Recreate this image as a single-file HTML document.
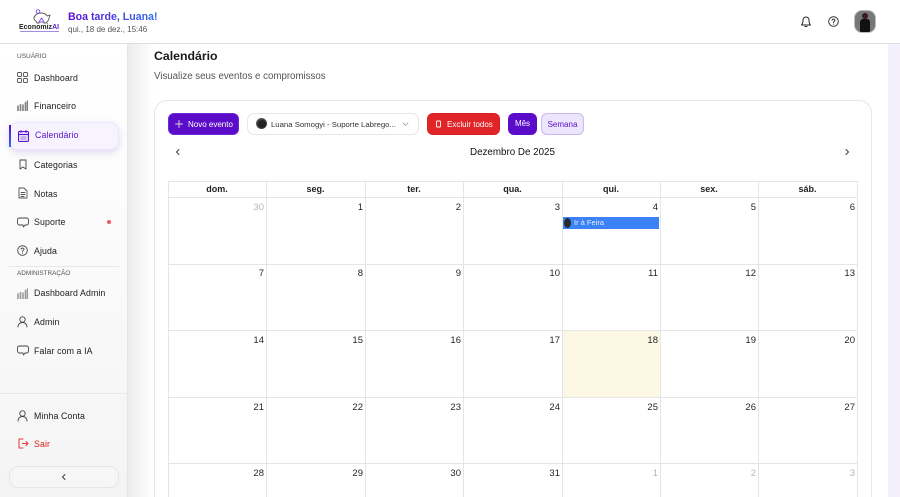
<!DOCTYPE html>
<html lang="pt-BR"><head><meta charset="utf-8"><style>
*{box-sizing:border-box}
html,body{margin:0;padding:0;width:900px;height:497px;overflow:hidden;background:#fff;font-family:"Liberation Sans",sans-serif;color:#171717}
#r{position:relative;width:900px;height:497px;overflow:hidden;background:#fff}
.a{position:absolute}
.t{position:absolute;white-space:nowrap;line-height:14px}
svg{position:absolute;fill:none;stroke-linecap:round;stroke-linejoin:round}
.nav{font-size:8.8px;color:#1c1c1c;letter-spacing:.1px}
.cell{position:absolute;font-size:9.5px;text-align:right;padding:5px 2px 0 0;line-height:11px;color:#262626}
.h{position:absolute;top:181px;height:17px;font-size:9px;font-weight:bold;text-align:center;line-height:16px;color:#222}
.v{position:absolute;top:181px;width:1px;height:316px;background:#e5e5e5}
.hl{position:absolute;left:168px;width:690px;height:1px;background:#e5e5e5}
.btn{position:absolute;top:113px;height:22px;border-radius:6px;font-size:8px;line-height:21px;white-space:nowrap}
</style></head><body><div id="r">
<div class="a" style="left:888px;top:44px;width:12px;height:453px;background:#f3f0fc"></div>
<div class="a" style="left:128px;top:44px;width:26px;height:453px;background:linear-gradient(90deg,#ececec,#fff)"></div>
<div class="a" style="left:0;top:44px;width:128px;height:453px;background:linear-gradient(180deg,#fff,#fbfbfb 40%,#f4f4f4);border-right:1px solid #e5e5e5"></div>
<div class="a" style="left:0;top:0;width:900px;height:44px;background:#fff;border-bottom:1px solid #dedede"></div>

<svg style="left:32px;top:9px" width="20" height="15" viewBox="0 0 20 15" stroke="#555" stroke-width=".9"><path d="M3 7c1-2 3-3 6-3s5 1 6 3l3-1-1 3c0 2-1 3-2 4l-1 1h-2v-1H7v1H5l-1-2C2 11 1 9 3 7z"/><circle cx="6" cy="2.500" r="1.800" stroke="#7c4ddb"/><path d="M7 13l2.500-4 2.500 4z" stroke="#7c4ddb"/></svg>
<div class="t" style="left:19px;top:23px;font-size:7px;font-weight:bold;color:#222;line-height:9px">Economiz<span style="color:#5a22c8">AI</span></div>
<div class="a" style="left:20px;top:31px;width:39px;height:1px;background:#a48ce6"></div>
<div class="t" style="left:68px;top:10px;font-size:10.6px;font-weight:bold;background:linear-gradient(90deg,#5b0fd0,#2f6ff0);-webkit-background-clip:text;background-clip:text;color:transparent">Boa tarde, Luana!</div>
<div class="t" style="left:68px;top:23px;font-size:8px;color:#555">qui., 18 de dez., 15:46</div>

<svg style="left:800px;top:15px" width="12" height="13" viewBox="0 0 12 13" stroke="#222" stroke-width="1"><path d="M1.500 10c1-1 1.500-2 1.500-5a3 3 0 0 1 6 0c0 3 .5 4 1.500 5zM5 11.500h2"/></svg>
<svg style="left:828px;top:16px" width="11" height="11" viewBox="0 0 11 11" stroke="#222" stroke-width=".9"><circle cx="5.500" cy="5.500" r="4.800"/><path d="M4 4.200c.3-1.700 3.200-1.500 3 .2-.1 1-1.500 1-1.500 2.100M5.500 8v.2"/></svg>
<div class="a" style="left:854px;top:10px;width:22px;height:23px;border-radius:8px;background:#777;overflow:hidden;border:1px solid #bbb"><div class="a" style="left:7px;top:2px;width:6px;height:6px;border-radius:50%;background:#3a1a1a"></div><div class="a" style="left:5px;top:8px;width:10px;height:14px;border-radius:3px 3px 0 0;background:#111"></div></div>

<div class="t" style="left:17px;top:50px;font-size:6.5px;color:#555">USUÁRIO</div>
<div class="t nav" style="left:34px;top:71px">Dashboard</div>
<svg style="left:17px;top:72px" width="11" height="11" viewBox="0 0 11 11" stroke="#555" stroke-width=".9"><rect x=".5" y=".5" width="4" height="4" rx="1"/><rect x="6.500" y=".5" width="4" height="4" rx="1"/><rect x=".5" y="6.500" width="4" height="4" rx="1"/><rect x="6.500" y="6.500" width="4" height="4" rx="1"/></svg>
<div class="t nav" style="left:34px;top:99px">Financeiro</div>
<svg style="left:17px;top:100px" width="11" height="11" viewBox="0 0 11 11" stroke="#808080" stroke-width="1.600" stroke-linecap="butt"><path d="M1 11V6M3.500 11V4.500M6 11V5M8.500 11V2.500M10.500 11V1"/></svg>

<div class="a" style="left:9px;top:122px;width:110px;height:28px;border-radius:9px;background:#f7f3ff;border:1px solid #ece6fb;box-shadow:0 3px 8px rgba(90,50,180,.16)"></div>
<div class="a" style="left:9px;top:125px;width:2px;height:22px;background:linear-gradient(#5b0fd0,#2f6ff0)"></div>
<div class="t nav" style="left:35px;top:128px;color:#5b12cf">Calendário</div>
<svg style="left:18px;top:130px" width="11" height="12" viewBox="0 0 11 12" stroke="#5b12cf" stroke-width="1"><rect x=".5" y="1.500" width="10" height="10" rx="1" fill="#e2d8fa"/><path d="M.5 4.500h10M3 .5v2M8 .5v2"/><path d="M3 7h5M3 9h5" stroke="#a98ae8"/></svg>

<div class="t nav" style="left:34px;top:158px">Categorias</div>
<svg style="left:19px;top:159px" width="8" height="11" viewBox="0 0 8 11" stroke="#444" stroke-width=".9"><path d="M1 1h6v9L4 8 1 10z"/></svg>
<div class="t nav" style="left:34px;top:187px">Notas</div>
<svg style="left:18px;top:187px" width="10" height="12" viewBox="0 0 10 12" stroke="#555" stroke-width=".9"><path d="M1 1h5l3 3v7H1zM3 5.500h4M3 7.500h4M3 9.500h3"/></svg>
<div class="t nav" style="left:34px;top:215px">Suporte</div>
<svg style="left:17px;top:217px" width="12" height="11" viewBox="0 0 12 11" stroke="#444" stroke-width=".9"><path d="M2.500 1h7a2 2 0 0 1 2 2v3a2 2 0 0 1-2 2H8l-1.500 2L6 8H2.500a2 2 0 0 1-2-2V3a2 2 0 0 1 2-2z"/></svg>
<div class="a" style="left:107px;top:220px;width:4px;height:4px;border-radius:50%;background:#ee5a5f"></div>
<div class="t nav" style="left:34px;top:244px">Ajuda</div>
<svg style="left:17px;top:245px" width="11" height="11" viewBox="0 0 11 11" stroke="#444" stroke-width=".9"><circle cx="5.500" cy="5.500" r="4.800"/><path d="M4 4.200c.3-1.700 3.200-1.500 3 .2-.1 1-1.500 1-1.500 2.100M5.500 8v.2"/></svg>
<div class="a" style="left:9px;top:266px;width:110px;height:1px;background:#e8e8e8"></div>
<div class="t" style="left:17px;top:267px;font-size:6.4px;color:#555">ADMINISTRAÇÃO</div>
<div class="t nav" style="left:34px;top:286px">Dashboard Admin</div>
<svg style="left:17px;top:288px" width="11" height="11" viewBox="0 0 11 11" stroke="#999" stroke-width="1.600" stroke-linecap="butt"><path d="M1 11V6M3.500 11V4.500M6 11V5M8.500 11V2.500M10.500 11V1"/></svg>
<div class="t nav" style="left:34px;top:315px">Admin</div>
<svg style="left:17px;top:316px" width="11" height="12" viewBox="0 0 11 12" stroke="#444" stroke-width=".9"><circle cx="5.500" cy="3.500" r="2.700"/><path d="M1 11c0-6 9-6 9 0"/></svg>
<div class="t nav" style="left:34px;top:344px">Falar com a IA</div>
<svg style="left:17px;top:345px" width="12" height="11" viewBox="0 0 12 11" stroke="#444" stroke-width=".9"><path d="M2.500 1h7a2 2 0 0 1 2 2v3a2 2 0 0 1-2 2H8l-1.500 2L6 8H2.500a2 2 0 0 1-2-2V3a2 2 0 0 1 2-2z"/></svg>
<div class="a" style="left:0;top:393px;width:128px;height:1px;background:#e8e8e8"></div>
<div class="t nav" style="left:34px;top:409px">Minha Conta</div>
<svg style="left:17px;top:410px" width="11" height="12" viewBox="0 0 11 12" stroke="#444" stroke-width=".9"><circle cx="5.500" cy="3.500" r="2.700"/><path d="M1 11c0-6 9-6 9 0"/></svg>
<div class="t nav" style="left:34px;top:437px;color:#e02020">Sair</div>
<svg style="left:18px;top:438px" width="11" height="11" viewBox="0 0 11 11" stroke="#e8353a" stroke-width="1"><path d="M5 1H1v9h4M4.500 5.500H10M8 3.500l2 2-2 2"/></svg>
<div class="a" style="left:9px;top:466px;width:110px;height:22px;border-radius:9px;border:1px solid #e6e6e6;background:#f6f6f6"></div>
<svg style="left:61px;top:473px" width="6" height="8" viewBox="0 0 6 8" stroke="#333" stroke-width=".9"><path d="M4 1.500L1.500 4 4 6.500"/></svg>

<div class="t" style="left:154px;top:48px;font-size:12.300px;font-weight:bold;color:#1a1a1a;line-height:17px">Calendário</div>
<div class="t" style="left:154px;top:70px;font-size:9.700px;color:#555">Visualize seus eventos e compromissos</div>

<div class="a" style="left:154px;top:100px;width:718px;height:420px;border:1px solid #e6e6e6;border-radius:13px;background:#fff"></div>

<div class="btn" style="left:168px;width:71px;background:#5a0cc9;color:#fff;padding-left:19px;border:1px solid #6d28d9">Novo evento</div>
<svg style="left:175px;top:120px" width="8" height="8" viewBox="0 0 8 8" stroke="#ddd" stroke-width=".9"><path d="M4 .5v7M.5 4h7"/></svg>
<div class="btn" style="left:247px;width:172px;background:#fff;border:1px solid #e6e6e6;border-radius:7px;color:#333;padding-left:23px;font-size:7.750px">Luana Somogyi - Suporte Labrego...</div>
<div class="a" style="left:256px;top:118px;width:11px;height:11px;border-radius:50%;background:radial-gradient(circle at 55% 55%,#222 40%,#999)"></div>
<svg style="left:402px;top:122px" width="7" height="5" viewBox="0 0 7 5" stroke="#999" stroke-width=".8"><path d="M1 1l2.500 2.500L6 1"/></svg>
<div class="btn" style="left:427px;width:73px;background:#e02428;color:#fff;padding-left:19px;border:1px solid #d81f24">Excluir todos</div>
<svg style="left:435px;top:120px" width="7" height="8" viewBox="0 0 7 8" stroke="#fff" stroke-width=".9"><rect x="1.500" y="1" width="4" height="6" rx=".8"/></svg>
<div class="btn" style="left:508px;width:29px;background:#5a0cc9;color:#fff;text-align:center;line-height:22px">Mês</div>
<div class="btn" style="left:541px;width:43px;background:#ece6fd;color:#5a0cc9;text-align:center;border:1px solid #c9b8f2">Semana</div>

<svg style="left:175px;top:148px" width="6" height="8" viewBox="0 0 6 8" stroke="#333" stroke-width=".9"><path d="M4 1.500L1.500 4 4 6.500"/></svg>
<svg style="left:844px;top:148px" width="6" height="8" viewBox="0 0 6 8" stroke="#333" stroke-width=".9"><path d="M2 1.500L4.500 4 2 6.500"/></svg>
<div class="t" style="left:470px;top:145px;font-size:9.800px;color:#111;line-height:14px;margin-top:1px">Dezembro De 2025</div>

<div class="a" style="left:562px;top:331px;width:98px;height:66px;background:#fdf8e3"></div>

<div class="hl" style="top:181px"></div><div class="hl" style="top:197px"></div><div class="hl" style="top:264px"></div><div class="hl" style="top:330px"></div><div class="hl" style="top:397px"></div><div class="hl" style="top:463px"></div>
<div class="v" style="left:168px"></div><div class="v" style="left:266px"></div><div class="v" style="left:365px"></div><div class="v" style="left:463px"></div><div class="v" style="left:562px"></div><div class="v" style="left:660px"></div><div class="v" style="left:758px"></div><div class="v" style="left:857px"></div>

<div class="h" style="left:168px;width:98px">dom.</div><div class="h" style="left:266px;width:99px">seg.</div><div class="h" style="left:365px;width:98px">ter.</div><div class="h" style="left:463px;width:99px">qua.</div><div class="h" style="left:562px;width:98px">qui.</div><div class="h" style="left:660px;width:98px">sex.</div><div class="h" style="left:758px;width:99px">sáb.</div>

<div class="cell" style="left:168px;top:197px;width:98px;color:#b5b5b5">30</div><div class="cell" style="left:266px;top:197px;width:99px">1</div><div class="cell" style="left:365px;top:197px;width:98px">2</div><div class="cell" style="left:463px;top:197px;width:99px">3</div><div class="cell" style="left:562px;top:197px;width:98px">4</div><div class="cell" style="left:660px;top:197px;width:98px">5</div><div class="cell" style="left:758px;top:197px;width:99px">6</div>
<div class="cell" style="left:168px;top:263px;width:98px">7</div><div class="cell" style="left:266px;top:263px;width:99px">8</div><div class="cell" style="left:365px;top:263px;width:98px">9</div><div class="cell" style="left:463px;top:263px;width:99px">10</div><div class="cell" style="left:562px;top:263px;width:98px">11</div><div class="cell" style="left:660px;top:263px;width:98px">12</div><div class="cell" style="left:758px;top:263px;width:99px">13</div>
<div class="cell" style="left:168px;top:330px;width:98px">14</div><div class="cell" style="left:266px;top:330px;width:99px">15</div><div class="cell" style="left:365px;top:330px;width:98px">16</div><div class="cell" style="left:463px;top:330px;width:99px">17</div><div class="cell" style="left:562px;top:330px;width:98px">18</div><div class="cell" style="left:660px;top:330px;width:98px">19</div><div class="cell" style="left:758px;top:330px;width:99px">20</div>
<div class="cell" style="left:168px;top:397px;width:98px">21</div><div class="cell" style="left:266px;top:397px;width:99px">22</div><div class="cell" style="left:365px;top:397px;width:98px">23</div><div class="cell" style="left:463px;top:397px;width:99px">24</div><div class="cell" style="left:562px;top:397px;width:98px">25</div><div class="cell" style="left:660px;top:397px;width:98px">26</div><div class="cell" style="left:758px;top:397px;width:99px">27</div>
<div class="cell" style="left:168px;top:463px;width:98px">28</div><div class="cell" style="left:266px;top:463px;width:99px">29</div><div class="cell" style="left:365px;top:463px;width:98px">30</div><div class="cell" style="left:463px;top:463px;width:99px">31</div><div class="cell" style="left:562px;top:463px;width:98px;color:#b5b5b5">1</div><div class="cell" style="left:660px;top:463px;width:98px;color:#b5b5b5">2</div><div class="cell" style="left:758px;top:463px;width:99px;color:#b5b5b5">3</div>

<div class="a" style="left:563px;top:217px;width:96px;height:12px;background:#3b82f6;color:#e8f0ff;font-size:7.500px;line-height:12px;padding-left:11px">Ir à Feira</div>
<div class="a" style="left:564px;top:218px;width:7px;height:10px;border-radius:50%;background:#2a2a2a"></div>
</div></body></html>
